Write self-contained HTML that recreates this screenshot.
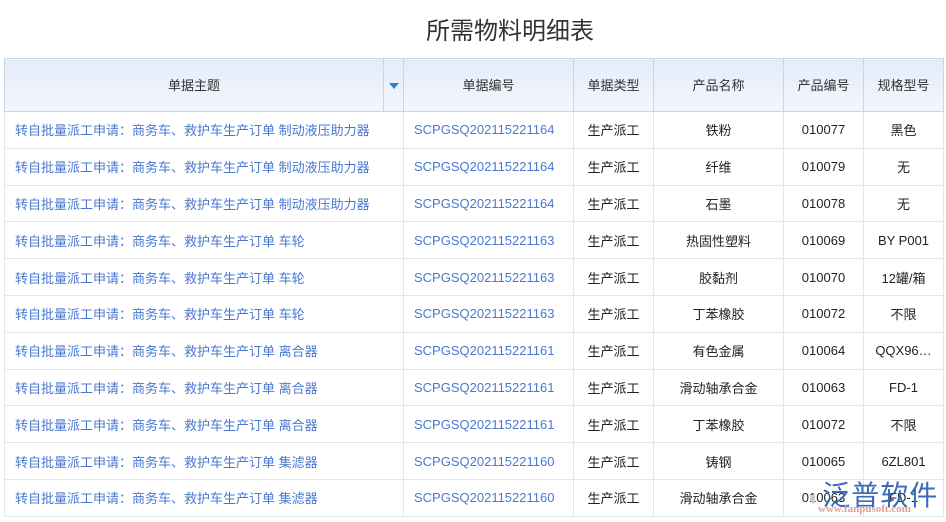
<!DOCTYPE html><html><head><meta charset="utf-8"><style>
body{margin:0;width:946px;height:522px;overflow:hidden;background:#fff;font-family:"Liberation Sans","Noto Sans CJK SC",sans-serif;position:relative}
.t{position:absolute;top:11px;left:0;width:1020px;text-align:center;font-size:24px;color:#333}
table{position:absolute;top:58px;left:4px;border-collapse:collapse;table-layout:fixed;font-size:13px}
th{height:50px;background:linear-gradient(#e4ecf9,#f3f7fd);border:1px solid #c9d6e8;font-weight:normal;color:#333;padding:0 0 2px 0}
td{height:35.8px;border:1px solid #e2e6ec;text-align:center;color:#222;padding:0;white-space:nowrap;overflow:hidden}
td.a{text-align:left;padding-left:10px;color:#4a78d0}
td.b{text-align:left;padding-left:10px;color:#4a78d0}
.arr{display:inline-block;width:0;height:0;border-left:5px solid transparent;border-right:5px solid transparent;border-top:6px solid #2a7fd0}
.logo{position:absolute;left:808px;top:474px;font-size:28px;color:#3a6ab8;letter-spacing:1px}
.url{position:absolute;left:818px;top:503px;font-size:11px;color:#e0a090;font-family:"Liberation Serif",serif;font-weight:bold}
</style></head><body>
<div class="t">所需物料明细表</div>
<table>
<colgroup><col style="width:379px"><col style="width:20px"><col style="width:170px"><col style="width:80px"><col style="width:130px"><col style="width:80px"><col style="width:80px"></colgroup>
<tr><th>单据主题</th><th><span class="arr"></span></th><th>单据编号</th><th>单据类型</th><th>产品名称</th><th>产品编号</th><th>规格型号</th></tr>
<tr><td class="a" colspan="2">转自批量派工申请：商务车、救护车生产订单 制动液压助力器</td><td class="b">SCPGSQ202115221164</td><td>生产派工</td><td>铁粉</td><td>010077</td><td>黑色</td></tr>
<tr><td class="a" colspan="2">转自批量派工申请：商务车、救护车生产订单 制动液压助力器</td><td class="b">SCPGSQ202115221164</td><td>生产派工</td><td>纤维</td><td>010079</td><td>无</td></tr>
<tr><td class="a" colspan="2">转自批量派工申请：商务车、救护车生产订单 制动液压助力器</td><td class="b">SCPGSQ202115221164</td><td>生产派工</td><td>石墨</td><td>010078</td><td>无</td></tr>
<tr><td class="a" colspan="2">转自批量派工申请：商务车、救护车生产订单 车轮</td><td class="b">SCPGSQ202115221163</td><td>生产派工</td><td>热固性塑料</td><td>010069</td><td>BY P001</td></tr>
<tr><td class="a" colspan="2">转自批量派工申请：商务车、救护车生产订单 车轮</td><td class="b">SCPGSQ202115221163</td><td>生产派工</td><td>胶黏剂</td><td>010070</td><td>12罐/箱</td></tr>
<tr><td class="a" colspan="2">转自批量派工申请：商务车、救护车生产订单 车轮</td><td class="b">SCPGSQ202115221163</td><td>生产派工</td><td>丁苯橡胶</td><td>010072</td><td>不限</td></tr>
<tr><td class="a" colspan="2">转自批量派工申请：商务车、救护车生产订单 离合器</td><td class="b">SCPGSQ202115221161</td><td>生产派工</td><td>有色金属</td><td>010064</td><td>QQX96…</td></tr>
<tr><td class="a" colspan="2">转自批量派工申请：商务车、救护车生产订单 离合器</td><td class="b">SCPGSQ202115221161</td><td>生产派工</td><td>滑动轴承合金</td><td>010063</td><td>FD-1</td></tr>
<tr><td class="a" colspan="2">转自批量派工申请：商务车、救护车生产订单 离合器</td><td class="b">SCPGSQ202115221161</td><td>生产派工</td><td>丁苯橡胶</td><td>010072</td><td>不限</td></tr>
<tr><td class="a" colspan="2">转自批量派工申请：商务车、救护车生产订单 集滤器</td><td class="b">SCPGSQ202115221160</td><td>生产派工</td><td>铸钢</td><td>010065</td><td>6ZL801</td></tr>
<tr><td class="a" colspan="2">转自批量派工申请：商务车、救护车生产订单 集滤器</td><td class="b">SCPGSQ202115221160</td><td>生产派工</td><td>滑动轴承合金</td><td>010063</td><td>FD-1</td></tr>
</table>
<div class="logo"><span style="color:#c8c8d0;font-size:22px">◐</span>泛普软件</div>
<div class="url">www.fanpusoft.com</div>
</body></html>
